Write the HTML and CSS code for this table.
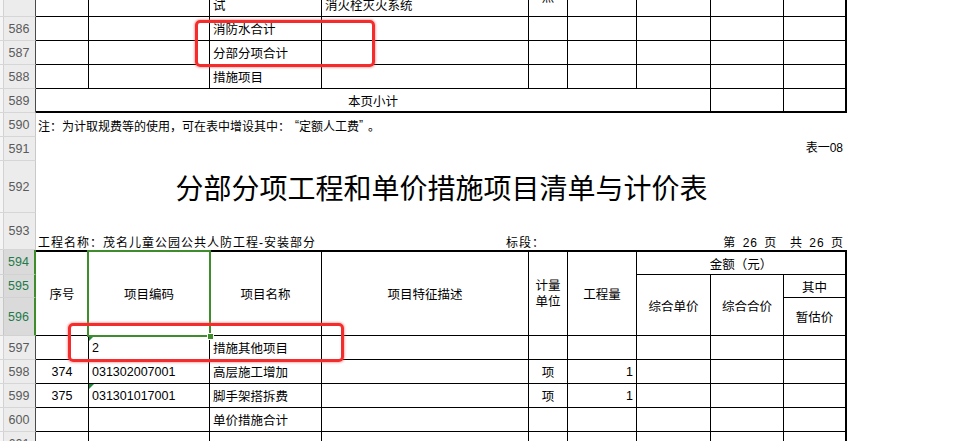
FILE: index.html
```html
<!DOCTYPE html>
<html lang="zh-CN">
<head>
<meta charset="utf-8">
<title>分部分项工程和单价措施项目清单与计价表</title>
<link rel="stylesheet" href="styles.css">
</head>
<body>
<div class="page">
  <div class="sheet">
    <!-- 585 -->
    <div class="rh tb">585</div>
    <div class="c ctr">373</div>
    <div class="c">030905002001</div>
    <div class="c wrap">水灭火控制装置调<br>试</div>
    <div class="c wrap">1.系统形式：<br>消火栓灭火系统</div>
    <div class="c ctr">点</div>
    <div class="c rt">40</div>
    <div class="c"></div>
    <div class="c"></div>
    <div class="c last"></div>
    <!-- 586 -->
    <div class="rh tb">586</div>
    <div class="c"></div>
    <div class="c"></div>
    <div class="c">消防水合计</div>
    <div class="c"></div>
    <div class="c"></div>
    <div class="c"></div>
    <div class="c"></div>
    <div class="c"></div>
    <div class="c last"></div>
    <!-- 587 -->
    <div class="rh tb">587</div>
    <div class="c"></div>
    <div class="c"></div>
    <div class="c">分部分项合计</div>
    <div class="c"></div>
    <div class="c"></div>
    <div class="c"></div>
    <div class="c"></div>
    <div class="c"></div>
    <div class="c last"></div>
    <!-- 588 -->
    <div class="rh tb">588</div>
    <div class="c"></div>
    <div class="c"></div>
    <div class="c">措施项目</div>
    <div class="c"></div>
    <div class="c"></div>
    <div class="c"></div>
    <div class="c"></div>
    <div class="c"></div>
    <div class="c last"></div>
    <!-- 589 -->
    <div class="rh tb">589</div>
    <div class="c ctr sum c7">本页小计</div>
    <div class="c sum"></div>
    <div class="c sum last"></div>
    <!-- 590 -->
    <div class="rh">590</div>
    <div class="wide note">注：为计取规费等的使用，可在表中增设其中：<span class="q qo">“</span>定额人工费<span class="q qc">”</span>。</div>
    <!-- 591 -->
    <div class="rh">591</div>
    <div class="wide tag">表一08</div>
    <!-- 592 -->
    <div class="rh">592</div>
    <div class="wide title">分部分项工程和单价措施项目清单与计价表</div>
    <!-- 593 -->
    <div class="rh">593</div>
    <div class="wide info">
      <span class="proj">工程名称：茂名儿童公园公共人防工程-安装部分</span>
      <span class="sect">标段：</span>
      <span class="pg">第 26 页&nbsp; 共 26 页</span>
    </div>
    <!-- 594 -->
    <div class="rh sel">594</div>
    <div class="c ctr top r3">序号</div>
    <div class="c ctr top r3">项目编码</div>
    <div class="c ctr top r3">项目名称</div>
    <div class="c ctr top r3">项目特征描述</div>
    <div class="c ctr top r3 two">计量<br>单位</div>
    <div class="c ctr top r3">工程量</div>
    <div class="c ctr top c3 last">金额（元）</div>
    <!-- 595 -->
    <div class="rh sel">595</div>
    <div class="c ctr r2">综合单价</div>
    <div class="c ctr r2">综合合价</div>
    <div class="c ctr last">其中</div>
    <!-- 596 -->
    <div class="rh sel">596</div>
    <div class="c ctr last">暂估价</div>
    <!-- 597 -->
    <div class="rh tb">597</div>
    <div class="c"></div>
    <div class="c tri">2</div>
    <div class="c">措施其他项目</div>
    <div class="c"></div>
    <div class="c"></div>
    <div class="c"></div>
    <div class="c"></div>
    <div class="c"></div>
    <div class="c last"></div>
    <!-- 598 -->
    <div class="rh tb">598</div>
    <div class="c ctr">374</div>
    <div class="c">031302007001</div>
    <div class="c">高层施工增加</div>
    <div class="c"></div>
    <div class="c ctr">项</div>
    <div class="c rt">1</div>
    <div class="c"></div>
    <div class="c"></div>
    <div class="c last"></div>
    <!-- 599 -->
    <div class="rh tb">599</div>
    <div class="c ctr">375</div>
    <div class="c tri">031301017001</div>
    <div class="c">脚手架搭拆费</div>
    <div class="c"></div>
    <div class="c ctr">项</div>
    <div class="c rt">1</div>
    <div class="c"></div>
    <div class="c"></div>
    <div class="c last"></div>
    <!-- 600 -->
    <div class="rh tb">600</div>
    <div class="c"></div>
    <div class="c"></div>
    <div class="c">单价措施合计</div>
    <div class="c"></div>
    <div class="c"></div>
    <div class="c"></div>
    <div class="c"></div>
    <div class="c"></div>
    <div class="c last"></div>
    <!-- 601 -->
    <div class="rh tb">601</div>
    <div class="c"></div>
    <div class="c"></div>
    <div class="c"></div>
    <div class="c"></div>
    <div class="c"></div>
    <div class="c"></div>
    <div class="c"></div>
    <div class="c"></div>
    <div class="c last"></div>
  </div>

  <div class="selection"><span class="handle"></span></div>
  <div class="mark mark-top"></div>
  <div class="mark mark-bottom"></div>
</div>
</body>
</html>
```

FILE: styles.css
```css
* { box-sizing: border-box; }
html, body {
  margin: 0;
  padding: 0;
  background: #fff;
  overflow: hidden;
}
body {
  font-family: "Liberation Sans", "Noto Sans CJK SC", sans-serif;
  color: #000;
}
.page {
  position: relative;
  width: 963px;
  height: 441px;
  overflow: hidden;
}
.sheet {
  display: grid;
  grid-template-columns: 36px 53px 121px 112px 207px 39px 69px 74px 73px 63px 1fr;
  grid-template-rows: 41px 24px 24px 24px 24px 24px 24px 52px 37px 25px 23px 38px 24px 24px 24px 24px 24px;
  margin-top: -24px;
}

/* row headers */
.rh {
  grid-column: 1;
  display: flex;
  align-items: center;
  justify-content: center;
  padding-left: 3px;
  background: linear-gradient(90deg, #f5f5f5 0 3px, #d2d2d2 3px 4px, #ececec 4px);
  border-right: 1px solid #c9c9c9;
  border-bottom: 1px solid #d6d6d6;
  font-size: 12.5px;
  color: #5a5a5a;
}
.rh.tb { border-right-color: #4a4a4a; }
.rh.sel {
  background: linear-gradient(90deg, #ececec 0 3px, #c6c6c6 3px 4px, #dadada 4px);
  border-right: 2px solid #3e8c2b;
  border-bottom-color: #d2d2d2;
  color: #1f7a4c;
  padding-right: 0;
}

/* cells */
.c {
  position: relative;
  display: flex;
  align-items: center;
  padding: 0 3px;
  border-right: 1px solid #000;
  border-bottom: 1px solid #000;
  font-size: 12.5px;
  white-space: nowrap;
  overflow: hidden;
}
.ctr { justify-content: center; text-align: center; }
.rt { justify-content: flex-end; }
.last { border-right-width: 2px; }
.sum { border-bottom-width: 2px; }
.top { border-top: 2px solid #000; }
.r3 { grid-row: span 3; }
.r2 { grid-row: span 2; }
.c3 { grid-column: span 3; }
.c7 { grid-column: span 7; }
.wrap {
  white-space: normal;
  line-height: 16px;
  padding-top: 4px;
}
.two { line-height: 16px; }
.tri::before {
  content: "";
  position: absolute;
  left: 0;
  top: 0;
  border-top: 5px solid #1f8a3c;
  border-right: 5px solid transparent;
}

/* free rows */
.wide {
  grid-column: 2 / 11;
  display: flex;
}
.note {
  align-items: center;
  padding-left: 2px;
  font-size: 12px;
  white-space: nowrap;
}
.q {
  display: inline-block;
  width: 9px;
}
.qo { text-align: right; }
.qc { text-align: left; }
.tag {
  justify-content: flex-end;
  align-items: flex-start;
  padding: 1px 4px 0 0;
  font-size: 12px;
}
.title {
  align-items: center;
  justify-content: center;
  font-family: "Noto Sans CJK SC", sans-serif;
  font-size: 28px;
  font-weight: 400;
}
.info {
  display: grid;
  grid-template-columns: 468px 1fr auto;
  align-items: end;
  padding: 0 3px 0 2px;
  font-size: 12px;
  line-height: 14px;
  letter-spacing: 1px;
  white-space: nowrap;
}
.pg { word-spacing: 2px; }

/* overlays */
.selection {
  position: absolute;
  left: 87px;
  top: 250px;
  width: 124px;
  height: 87px;
  border: 2px solid #3e8c2b;
}
.handle {
  position: absolute;
  right: -5px;
  bottom: -5px;
  width: 7px;
  height: 7px;
  background: #3e8c2b;
  border: 1px solid #fff;
}
.mark {
  position: absolute;
  border: 3px solid #f42c2c;
  border-radius: 5px;
  box-shadow: 0 0 2px 1px rgba(255, 90, 90, 0.45);
}
.mark-top {
  left: 195px;
  top: 20px;
  width: 180px;
  height: 47px;
}
.mark-bottom {
  left: 68px;
  top: 323px;
  width: 276px;
  height: 39px;
}
```
